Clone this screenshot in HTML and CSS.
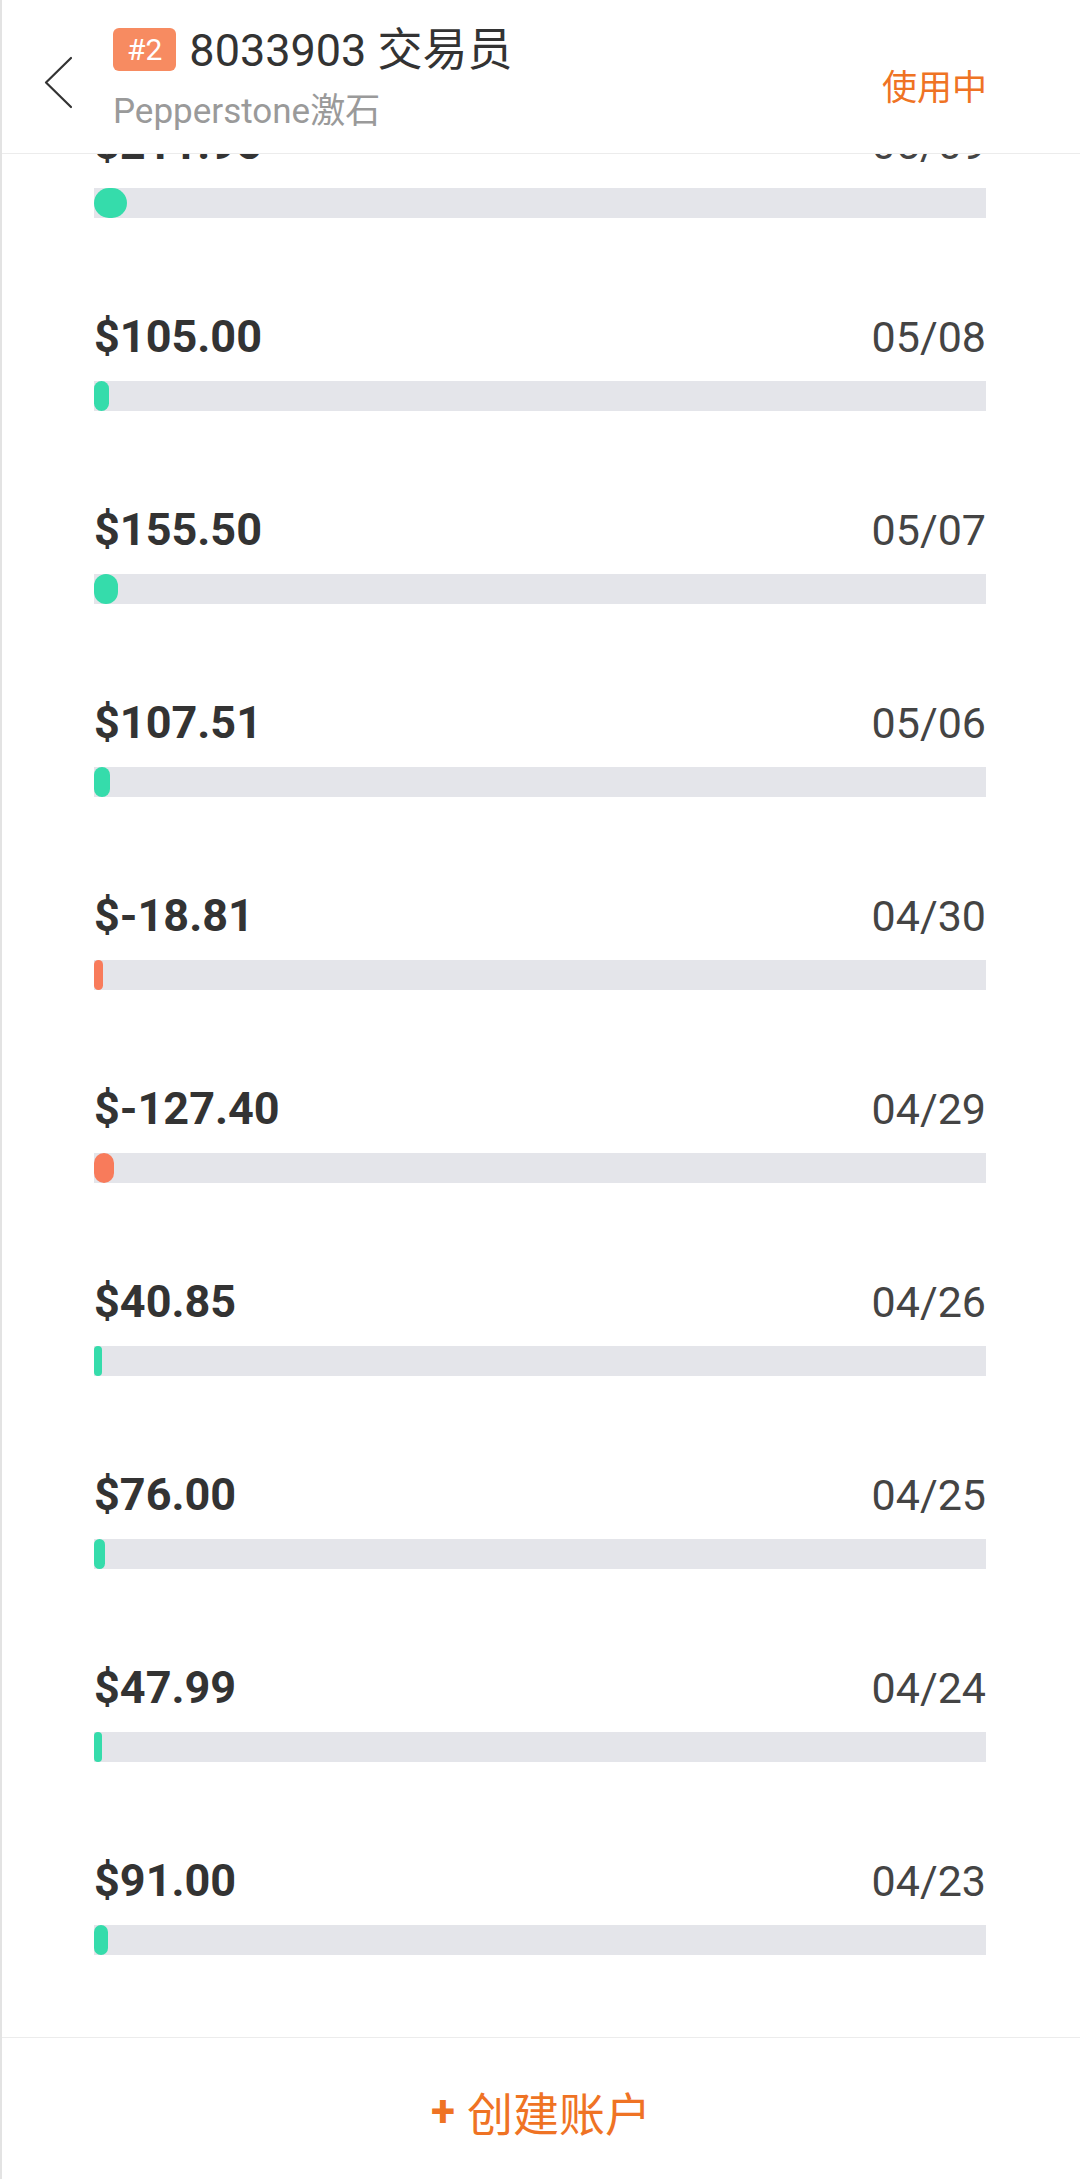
FILE: index.html
```html
<!DOCTYPE html>
<html lang="zh-CN">
<head>
<meta charset="utf-8">
<title>8033903 交易员</title>
<link rel="stylesheet" href="styles.css">
</head>
<body>
<div class="app">
  <header class="topbar">
    <svg class="back" width="30" height="53" viewBox="0 0 30 53" aria-hidden="true">
      <polyline points="27,2 2,26.5 27,51" fill="none" stroke="#333" stroke-width="2.2" stroke-linecap="round" stroke-linejoin="round"/>
    </svg>
    <div class="info">
      <div class="title-row">
        <span class="badge">#2</span>
        <span class="title">8033903 交易员</span>
      </div>
      <div class="subtitle">Pepperstone激石</div>
    </div>
    <div class="status">使用中</div>
  </header>

  <main class="list">
    <div class="row"><div class="line"><span class="amount">$211.95</span><span class="date">05/09</span></div><div class="track"><div class="fill up" style="width:33px"></div></div></div>
    <div class="row"><div class="line"><span class="amount">$105.00</span><span class="date">05/08</span></div><div class="track"><div class="fill up" style="width:15px"></div></div></div>
    <div class="row"><div class="line"><span class="amount">$155.50</span><span class="date">05/07</span></div><div class="track"><div class="fill up" style="width:24px"></div></div></div>
    <div class="row"><div class="line"><span class="amount">$107.51</span><span class="date">05/06</span></div><div class="track"><div class="fill up" style="width:16px"></div></div></div>
    <div class="row"><div class="line"><span class="amount">$-18.81</span><span class="date">04/30</span></div><div class="track"><div class="fill down" style="width:9px"></div></div></div>
    <div class="row"><div class="line"><span class="amount">$-127.40</span><span class="date">04/29</span></div><div class="track"><div class="fill down" style="width:20px"></div></div></div>
    <div class="row"><div class="line"><span class="amount">$40.85</span><span class="date">04/26</span></div><div class="track"><div class="fill up" style="width:8px"></div></div></div>
    <div class="row"><div class="line"><span class="amount">$76.00</span><span class="date">04/25</span></div><div class="track"><div class="fill up" style="width:11px"></div></div></div>
    <div class="row"><div class="line"><span class="amount">$47.99</span><span class="date">04/24</span></div><div class="track"><div class="fill up" style="width:8px"></div></div></div>
    <div class="row"><div class="line"><span class="amount">$91.00</span><span class="date">04/23</span></div><div class="track"><div class="fill up" style="width:14px"></div></div></div>
  </main>

  <footer class="footer">
    <span class="plus">+</span><span class="create">创建账户</span>
  </footer>
</div>
</body>
</html>
```

FILE: styles.css
```css
* { box-sizing: border-box; }

html, body {
  margin: 0;
  padding: 0;
  background: #ffffff;
}

body {
  font-family: Roboto, "Noto Sans CJK SC", "Noto Sans", sans-serif;
  color: #333333;
}

.app {
  width: 1080px;
  height: 2179px;
  display: flex;
  flex-direction: column;
  border-left: 2px solid #e3e3e3;
  overflow: hidden;
}

/* ---------- header (fixed, overlays the scrolled list) ---------- */
.topbar {
  position: fixed;
  top: 0;
  left: 2px;
  right: 0;
  height: 154px;
  background: #ffffff;
  border-bottom: 1px solid #ececec;
  display: flex;
  align-items: flex-start;
  padding-left: 42px;
  z-index: 2;
}

.back {
  margin-top: 56px;
  flex: none;
}

.info {
  margin-left: 39px;
  padding-top: 28px;
  display: flex;
  flex-direction: column;
}

.title-row {
  display: flex;
  align-items: center;
  height: 43px;
}

.badge {
  height: 43px;
  padding: 0 14px;
  background: #f78b61;
  color: #ffffff;
  border-radius: 6px;
  font-family: Roboto, sans-serif;
  font-size: 30px;
  line-height: 43px;
}

.title {
  margin-left: 13px;
  padding-top: 3px;
  font-size: 45px;
  line-height: 40px;
  color: #333333;
  white-space: nowrap;
}

.subtitle {
  margin-top: 21px;
  font-size: 35px;
  line-height: 40px;
  color: #9a9a9a;
  white-space: nowrap;
}

.status {
  margin-left: auto;
  margin-top: 67px;
  padding-right: 93px;
  font-family: "Noto Sans CJK SC", sans-serif;
  font-size: 35px;
  line-height: 35px;
  color: #ef7324;
}

/* ---------- list ---------- */
.list {
  flex: 1;
  min-height: 0;
  padding: 118px 94px 0 92px;
  display: flex;
  flex-direction: column;
  gap: 93px;
}

.row {
  flex: none;
}

.line {
  height: 52px;
  display: flex;
  justify-content: space-between;
  align-items: center;
}

.amount {
  font-size: 45px;
  font-weight: 700;
  line-height: 52px;
  color: #333333;
}

.date {
  font-size: 43px;
  line-height: 52px;
  color: #444444;
}

.track {
  margin-top: 18px;
  height: 30px;
  background: #e4e5ea;
}

.fill {
  height: 30px;
  border-radius: 999px;
}

.fill.up { background: #35dcab; }
.fill.down { background: #f87b5b; }

/* ---------- footer ---------- */
.footer {
  height: 142px;
  flex: none;
  border-top: 1px solid #ececec;
  display: flex;
  align-items: center;
  justify-content: center;
  padding-top: 4px;
  color: #ef7324;
}

.plus {
  font-family: Roboto, sans-serif;
  font-weight: 700;
  font-size: 44px;
  line-height: 46px;
  margin-right: 12px;
}

.create {
  font-family: "Noto Sans CJK SC", sans-serif;
  font-size: 46px;
  line-height: 46px;
}
```
